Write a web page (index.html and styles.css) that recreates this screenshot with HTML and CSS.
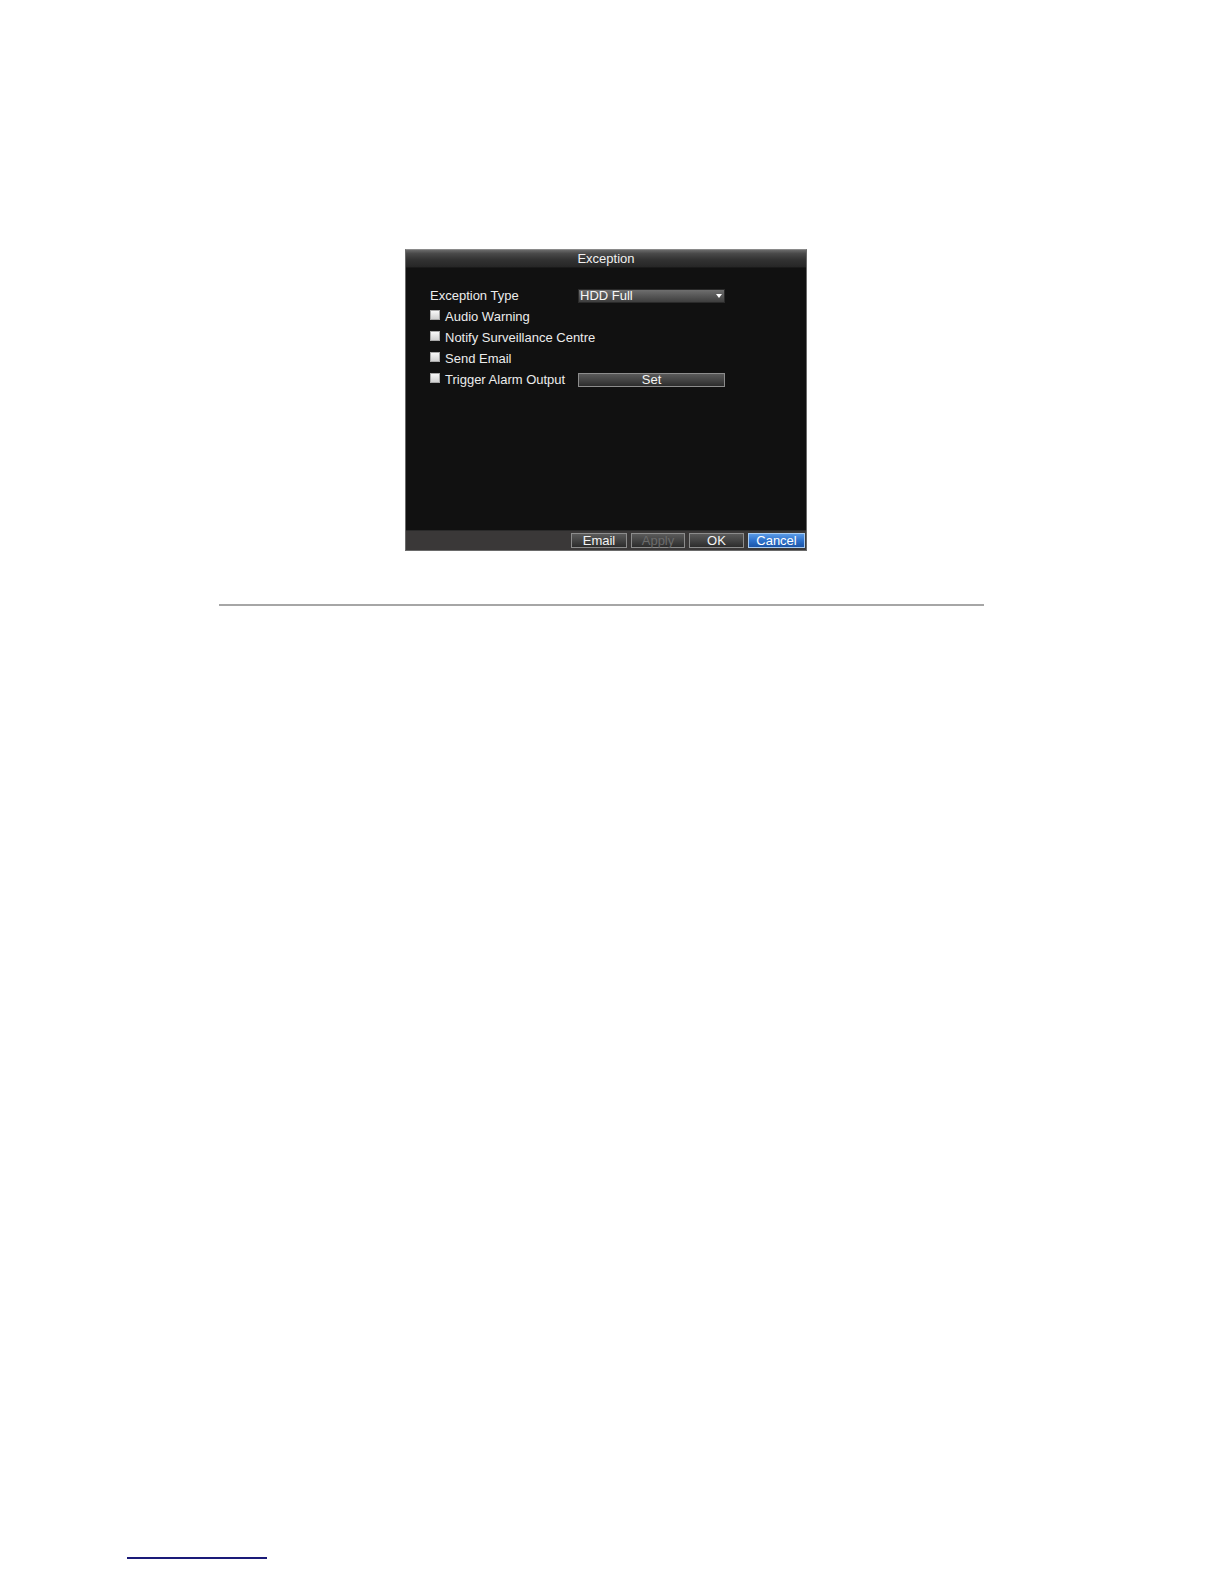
FILE: index.html
```html
<!DOCTYPE html>
<html>
<head>
<meta charset="utf-8">
<link rel="stylesheet" href="styles.css">
</head>
<body>
<div class="page">
  <div class="figure">
    <div class="dvr">
      <div class="titlebar">Exception</div>
      <div class="content">
        <div class="grid">
          <div class="lbl plain">Exception Type</div>
          <div class="select"><span>HDD Full</span><span class="arrow"></span></div>
          <div class="lbl"><span class="cb"></span>Audio Warning</div>
          <div></div>
          <div class="lbl"><span class="cb"></span>Notify Surveillance Centre</div>
          <div></div>
          <div class="lbl"><span class="cb"></span>Send Email</div>
          <div></div>
          <div class="lbl"><span class="cb"></span>Trigger Alarm Output</div>
          <div class="btn wide">Set</div>
        </div>
      </div>
      <div class="bottombar">
        <div class="btn b-email">Email</div>
        <div class="btn b-apply disabled">Apply</div>
        <div class="btn b-ok">OK</div>
        <div class="btn b-cancel active">Cancel</div>
      </div>
    </div>
  </div>
  <div class="rule"></div>
  <div class="footlink"></div>
</div>
</body>
</html>
```

FILE: styles.css
```css
html, body {
  margin: 0;
  padding: 0;
  background: #ffffff;
}
body {
  font-family: "Liberation Sans", Arial, sans-serif;
}
.page {
  width: 1224px;
  height: 1584px;
  padding-top: 249px;
  box-sizing: border-box;
}
.figure {
  margin-left: 405px;
  width: 402px;
}
.dvr {
  width: 402px;
  height: 302px;
  box-sizing: border-box;
  background: #111111;
  border: 1px solid #6a6a6a;
  border-top-color: #8a8a8a;
  display: flex;
  flex-direction: column;
  color: #f2f2f2;
  font-size: 13px;
}
.titlebar {
  height: 17px;
  line-height: 17px;
  text-align: center;
  color: #f0f0f0;
  background: linear-gradient(#6a6a6a 0%, #4a4a4a 20%, #333333 55%, #262626 100%);
  border-bottom: 1px solid #1a1a1a;
  flex: none;
}
.content {
  flex: 1;
  padding: 17px 0 0 23px;
}
.grid {
  display: grid;
  grid-template-columns: 149px 147px;
  grid-auto-rows: 21px;
  align-items: center;
}
.lbl {
  display: flex;
  align-items: center;
  white-space: nowrap;
  color: #ececec;
  min-width: 0;
  overflow: visible;
}
.lbl.plain {
  padding-left: 1px;
}
.cb {
  flex: none;
  width: 10px;
  height: 10px;
  background: linear-gradient(#f8f8f8, #d0d0d0);
  border: 1px solid #a8a8a8;
  box-sizing: border-box;
  margin: 0 5px 0 1px;
  position: relative;
  top: -2px;
}
.select {
  height: 14px;
  background: linear-gradient(#6e6e6e 0%, #585858 45%, #3e3e3e 100%);
  border: 1px solid #2a2a2a;
  box-sizing: border-box;
  display: flex;
  align-items: center;
  justify-content: space-between;
  line-height: 12px;
  color: #f6f6f6;
}
.select span:first-child {
  padding-left: 1px;
}
.arrow {
  width: 0;
  height: 0;
  border-left: 3px solid transparent;
  border-right: 3px solid transparent;
  border-top: 4px solid #ffffff;
  margin-right: 2px;
}
.btn {
  height: 14px;
  box-sizing: border-box;
  border: 1px solid #8c8c8c;
  background: linear-gradient(#5a5a5a 0%, #444444 50%, #2c2c2c 100%);
  color: #f4f4f4;
  text-align: center;
  line-height: 12px;
  font-size: 13px;
}
.btn.wide {
  width: 147px;
}
.bottombar {
  flex: none;
  height: 19px;
  background: #3a3838;
  border-top: 1px solid #2a2a2a;
  display: flex;
  justify-content: flex-end;
  align-items: center;
  gap: 4px;
  padding-right: 1px;
}
.bottombar .btn {
  height: 15px;
  line-height: 13px;
}
.b-email { width: 56px; }
.b-apply { width: 54px; }
.b-ok { width: 55px; }
.b-cancel { width: 57px; }
.btn.disabled {
  color: #6c6c6c;
}
.btn.active {
  background: linear-gradient(#5a9ae6 0%, #2f72cc 50%, #1c55a8 100%);
  border-color: #a8cbf0;
  color: #ffffff;
}
.rule {
  margin-top: 53px;
  margin-left: 219px;
  width: 765px;
  height: 2px;
  background: #a6a6a6;
}
.footlink {
  margin-top: 951px;
  margin-left: 127px;
  width: 140px;
  height: 2px;
  background: #1a1a78;
}
```
